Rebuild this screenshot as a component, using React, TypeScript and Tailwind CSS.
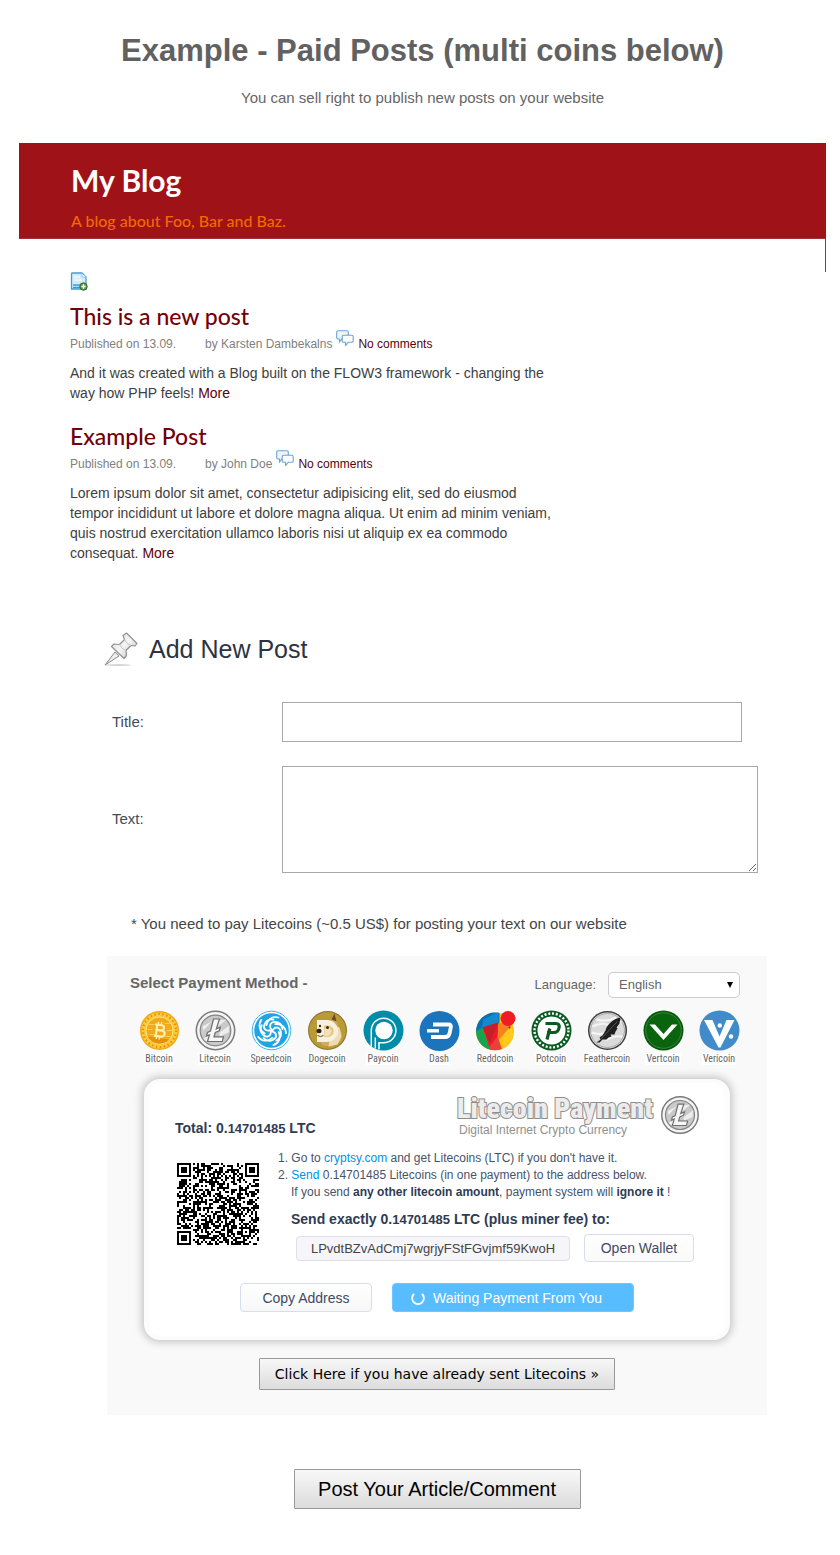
import type { ReactNode } from 'react'

const coins: { name: string; art: ReactNode }[] = [
  {
    name: 'Bitcoin',
    art: (
      <>
        <circle cx="20" cy="20" r="19.5" fill="#f0a818" />
        <circle cx="20" cy="20" r="18" fill="#fdc93b" />
        <circle cx="20" cy="20" r="16.5" fill="none" stroke="#e08f0c" strokeWidth="2" strokeDasharray="1.5 2.5" />
        <circle cx="20" cy="20" r="13.5" fill="#f3a91c" stroke="#ffe27a" strokeWidth="1" />
        <path d="M8 26 A14 14 0 0 0 30 29 Z" fill="#e68f10" />
        <path d="M9 14h6M25 13h7M8 19h5M27 20h6M10 24h4M26 26h5" stroke="#ffdc66" strokeWidth=".8" />
        <g transform="rotate(8 20 20)" fill="none" stroke="#fff0a8" strokeWidth="2.2">
          <path d="M17 14v12M15 14.500h6.500a2.600 2.600 0 0 1 0 5.200h-4M17 19.800h5.500a3 3 0 0 1 0 6H15" />
          <path d="M18 11.500v3M21 11.500v3M18 26v3M21 26v3" strokeWidth="1.400" />
        </g>
      </>
    ),
  },
  { name: 'Litecoin', art: <LitecoinArt /> },
  {
    name: 'Speedcoin',
    art: (
      <>
        <circle cx="20" cy="20" r="19.300" fill="#fff" stroke="#3bb6ea" strokeWidth="1" />
        <circle cx="20" cy="20" r="17.300" fill="#21a5e2" />
        {[0, 72, 144, 216, 288].map((angle) => (
          <g key={angle} transform={`rotate(${angle} 20 20)`} fill="none" stroke="#fff" strokeLinecap="round">
            <path d="M20 19C17 15 19 11 24 11.500C28 12 30.500 15 31 18.500" strokeWidth="1.800" />
            <path d="M15 14.500C16.500 8.500 21 5.500 27 7" strokeWidth="1.800" />
          </g>
        ))}
      </>
    ),
  },
  {
    name: 'Dogecoin',
    art: (
      <>
        <circle cx="20" cy="20" r="19.500" fill="#8b742d" />
        <circle cx="20" cy="20" r="18.500" fill="#b89a36" />
        <path d="M23 12l4-7 3 9 4 8v8l-9 6-10-1-5-8z" fill="#d5a960" />
        <path d="M24 9l3-6 2 8z" fill="#6c4a2c" />
        <path d="M24 15l8 2 2 9-4 8-9 2z" fill="#eedbb4" />
        <path d="M9.500 9.500h10a11 11 0 0 1 0 22h-10z" fill="#f6f1df" />
        <path d="M16.500 15h4a5.500 5.500 0 0 1 0 11.500h-4z" fill="#e9c57e" />
        <path d="M17 18l5-1 2 4-2 4-5 1z" fill="#f3e2b8" />
        <ellipse cx="11.500" cy="20.500" rx="2.600" ry="2.200" fill="#29231d" />
        <circle cx="12.500" cy="15.500" r="1.200" fill="#3a2c20" />
        <circle cx="20" cy="17" r="1.500" fill="#3a2c20" />
        <path d="M10 25q3 2 6 0" fill="none" stroke="#5e4733" strokeWidth="1" />
      </>
    ),
  },
  {
    name: 'Paycoin',
    art: (
      <>
        <circle cx="20" cy="20" r="20" fill="#008ba8" />
        <path d="M7.800 36V20A12.300 12.300 0 1 1 20 32.300H15.500V39" fill="none" stroke="#fff" strokeWidth="1.500" />
        <path d="M11.800 38V27" stroke="#fff" strokeWidth="1.500" />
        <circle cx="20.500" cy="20" r="8.700" fill="#fff" />
      </>
    ),
  },
  {
    name: 'Dash',
    art: (
      <>
        <circle cx="20" cy="20.500" r="20" fill="#1c75bc" />
        <path d="M13.500 14h15.500q3 0 2.300 3l-1.300 6q-.8 3.500-4.500 3.500H11.500" fill="none" stroke="#fff" strokeWidth="3.800" strokeLinejoin="round" />
        <path d="M7.500 20.300h12" stroke="#fff" strokeWidth="3.400" />
      </>
    ),
  },
  {
    name: 'Reddcoin',
    art: (
      <>
        <clipPath id="redd-disc"><circle cx="19.500" cy="21" r="19" /></clipPath>
        <g clipPath="url(#redd-disc)">
          <path d="M0 0h40v40H0z" fill="#ffc20e" />
          <path d="M0 0h24l0 13-18 6-6 4z" fill="#0072bc" />
          <path d="M8 9l15-8v12L6 18z" fill="#1588cf" />
          <path d="M0 21l7-4 8 22H6L0 34z" fill="#15a550" />
          <path d="M7 17l16-5-1 18-7 10z" fill="#ed1c24" />
          <path d="M7 17l16-5-9 21z" fill="#c5202a" />
          <path d="M23 12l13 3-14 16z" fill="#f58220" />
          <path d="M14 36l8-10 5 14H14z" fill="#e8403a" />
          <path d="M36 15l-8 9 0 16 12-4z" fill="#ffc91f" />
        </g>
        <circle cx="32.500" cy="8" r="7.500" fill="#ee1c25" />
        <circle cx="34" cy="17" r="1" fill="#6d2a1f" />
      </>
    ),
  },
  {
    name: 'Potcoin',
    art: (
      <>
        <circle cx="20" cy="20" r="20" fill="#0a5a22" />
        <circle cx="20" cy="20" r="17" fill="none" stroke="#fff" strokeWidth="2.400" strokeDasharray="2 1.815" />
        <circle cx="20" cy="20" r="14" fill="#fff" />
        <path d="M15.500 29l2.800-11M14 13h10.500q4 0 3 4.500t-5 4.500h-7" fill="none" stroke="#0a5a22" strokeWidth="3.200" />
      </>
    ),
  },
  {
    name: 'Feathercoin',
    art: (
      <>
        <circle cx="20" cy="20" r="19.500" fill="#3c3c3c" />
        <circle cx="20" cy="20" r="18" fill="#f2f2f2" />
        <circle cx="20" cy="20" r="17" fill="#dadada" stroke="#8a8a8a" strokeWidth=".7" />
        <path d="M5 16q8-4 15-2t14-3M4 22q9 3 15 0M18 30q8-5 17-4M9 9q10 3 20-2" fill="none" stroke="#f5f5f5" strokeWidth="2" />
        <path d="M33 7c-6 1-11 5-14 10l-1 3-3 5-3 2 1 2-4 3 3 0 3-3 4 0 2-2 3-1-1-2 4 0 1-3 2-3-1-1 3-4z" fill="#1f1f1f" />
        <path d="M11 31L30 11" stroke="#777" strokeWidth=".6" />
      </>
    ),
  },
  {
    name: 'Vertcoin',
    art: (
      <>
        <circle cx="20" cy="20" r="20" fill="#06590b" />
        <circle cx="20" cy="20" r="17.800" fill="#0a640e" stroke="#4c9650" strokeWidth=".7" />
        <path d="M6 14h5.500l8.500 9.500 8.500-9.500H34L20 29.500z" fill="#fff" />
      </>
    ),
  },
  {
    name: 'Vericoin',
    art: (
      <>
        <circle cx="20" cy="20" r="20" fill="#418bca" />
        <path d="M4.500 9.500h8.500l7 16.500 7-16.500H35L21 37h-2z" fill="#fff" />
        <circle cx="20.300" cy="15" r="2.200" fill="#fff" />
        <circle cx="31.500" cy="26" r="2.200" fill="#fff" />
      </>
    ),
  },
]

function LitecoinArt() {
  return (
    <>
      <circle cx="20" cy="20" r="19.200" fill="#f4f4f4" stroke="#7a7a7a" strokeWidth="1.500" />
      <circle cx="20" cy="20" r="15.300" fill="#c9c9c9" stroke="#858585" strokeWidth="1.200" />
      <path d="M7 16l9-5-8 9zM23 10l8-1-10 8zM8 28l6-3-3 6zM24 22l10-7-1 7-9 4z" fill="#eee" />
      <path d="M18 8.500h6l-3.200 10 4-1.800-1 3.500-4 1.800-1.300 4.300h9.500L26.800 31H12l2-6.800-3 1.300 1-3.500 3-1.400z" fill="#f7f7f7" stroke="#6e6e6e" strokeWidth="1.200" />
    </>
  )
}

const SIZE = 41

function qrCells() {
  const cells: string[] = []
  let seed = 14701485
  const ring = (x: number, y: number, cx: number, cy: number) => Math.max(Math.abs(x - cx), Math.abs(y - cy))
  for (let y = 0; y < SIZE; y++) {
    for (let x = 0; x < SIZE; x++) {
      seed = (seed * 48271) % 2147483647
      let dark = (seed >> 12) % 100 < 51
      if (x === 6 || y === 6) dark = (x + y) % 2 === 0
      const align = ring(x, y, 34, 34)
      if (align <= 2) dark = align !== 1
      for (const [cx, cy] of [[3, 3], [37, 3], [3, 37]]) {
        const d = ring(x, y, cx, cy)
        if (d <= 4) dark = d === 3 || d <= 1
      }
      if (dark) cells.push(`M${x} ${y}h1v1h-1z`)
    }
  }
  return cells.join('')
}

function CommentIcon() {
  return (
    <svg viewBox="0 0 18 16" className="mx-1 mb-2 h-4 w-[18px]" fill="#fff" stroke="#6aa5d8" strokeWidth="1.100">
      <path d="M2 .8h9q1.300 0 1.300 1.300v5.500q0 1.300-1.300 1.300H6L3.500 12V9H2Q.7 9 .7 7.600V2.100Q.7.800 2 .8z" fill="#eef5fc" />
      <path d="M7.500 5.300h8.300q1.400 0 1.400 1.400v4.300q0 1.300-1.400 1.300h-3.500L9.500 15.500v-3.200h-2q-1.300 0-1.300-1.300V6.700q0-1.400 1.300-1.400z" />
    </svg>
  )
}

function Post({ title, author, children }: { title: string; author: string; children: ReactNode }) {
  return (
    <article className="h-[120px]">
      <h2 className="font-[Lato,'Open_Sans',sans-serif] text-[23px] leading-[34px] font-medium text-[#730009]">{title}</h2>
      <p className="flex h-[21px] items-end text-xs leading-5 text-[#808080]">
        <span className="w-[135px]">Published on 13.09.</span>
        <span>by {author}</span>
        <CommentIcon />
        <a href="#comments" className="text-[#5c0008]">No comments</a>
      </p>
      <p className="mt-[9px] max-w-[488px] text-sm leading-5 text-[#404040]">{children}</p>
    </article>
  )
}

export default function App() {
  return (
    <main className="min-h-screen bg-white pr-[14px] pb-12 pl-[19px] font-['Liberation_Sans',Arial,sans-serif] text-[#666]">
      <header className="pt-[29px] text-center">
        <h1 className="text-[31px] leading-[44px] font-bold text-[#616161]">Example - Paid Posts (multi coins below)</h1>
        <p className="mt-[15px] text-[15px] leading-5">You can sell right to publish new posts on your website</p>
      </header>

      <section className="mt-[35px]">
        <div className="h-24 border-b border-[#a33038] bg-[#9f1218] pt-4 pl-[52px] font-[Lato,'Open_Sans',sans-serif]">
          <h2 className="text-3xl leading-[42px] font-bold text-white">My Blog</h2>
          <p className="mt-2 text-base leading-6 font-medium text-[#f06a00]">A blog about Foo, Bar and Baz.</p>
        </div>
        <div className="h-[33px] border-r border-r-[#a33038]" />
        <div className="pl-[51px]">
          <svg viewBox="0 0 18 19" className="h-[19px] w-[18px]">
            <path d="M2 1h10l4 4v12H1.500V2z" fill="#d3ecfb" stroke="#4a9ad4" strokeWidth="1.300" />
            <path d="M12 1.500V5h4" fill="#fff" stroke="#7dbbe6" strokeWidth=".8" />
            <path d="M4 5h6M4 8h8" stroke="#fff" strokeWidth="1.200" />
            <path d="M3 13h7M3 15.500h7" stroke="#27a2de" strokeWidth="1.300" />
            <circle cx="13.500" cy="14.500" r="3.700" fill="#5d9440" stroke="#376b23" />
            <path d="M13.500 12.300v4.400M11.300 14.500h4.400" stroke="#fff" strokeWidth="1.400" />
          </svg>
          <div className="mt-2">
            <Post title="This is a new post" author="Karsten Dambekalns">
              And it was created with a Blog built on the FLOW3 framework - changing the way how PHP feels! <a href="#more" className="text-[#5c0008]">More</a>
            </Post>
            <Post title="Example Post" author="John Doe">
              Lorem ipsum dolor sit amet, consectetur adipisicing elit, sed do eiusmod tempor incididunt ut labore et dolore magna aliqua. Ut enim ad minim veniam, quis nostrud exercitation ullamco laboris nisi ut aliquip ex ea commodo consequat. <a href="#more" className="text-[#5c0008]">More</a>
            </Post>
          </div>
        </div>
      </section>

      <div className="pl-[29px]">
        <form className="mx-auto mt-[93px] w-full max-w-[660px]" onSubmit={(e) => e.preventDefault()}>
          <div className="-ml-[3px] flex items-center gap-[11px]">
            <svg viewBox="0 0 34 34" className="h-[34px] w-[34px]">
              <defs>
                <linearGradient id="pin" x1="0" y1="0" x2="1" y2="1">
                  <stop offset="0" stopColor="#d8d8d8" />
                  <stop offset=".5" stopColor="#f6f6f6" />
                  <stop offset="1" stopColor="#b5b5b5" />
                </linearGradient>
              </defs>
              <ellipse cx="14" cy="33" rx="13" ry=".8" fill="#c9c9c9" />
              <path d="M11 20L1 33L15 24z" fill="#ededed" stroke="#8a8a8a" />
              <path d="M19 3.500L22.500 1 33 11.500 31 14l-4-.5-5 5 .5 5-2.500 3L7.500 14.500 10 12l5.500.5 5-5z" fill="url(#pin)" stroke="#929292" strokeWidth="1.200" strokeLinejoin="round" />
              <path d="M20.500 7.500q2 4.500 6.500 6M15.500 12.500q2 4.500 6.500 6" fill="none" stroke="#c6c6c6" />
            </svg>
            <h2 className="text-[25px] leading-[34px] text-[#2d3340]">Add New Post</h2>
          </div>

          <div className="mt-9 flex items-center pl-[5px] text-[15px] text-[#454b57]">
            <label htmlFor="title" className="w-[170px]">Title:</label>
            <input id="title" type="text" className="h-10 w-[460px] border border-[#a9a9a9] bg-white px-2" />
          </div>
          <div className="mt-6 flex items-center pl-[5px] text-[15px] text-[#454b57]">
            <label htmlFor="text" className="w-[170px]">Text:</label>
            <textarea id="text" className="block h-[107px] w-[476px] border border-[#a9a9a9] bg-white p-2" />
          </div>
          <p className="mt-[41px] pl-6 text-[15px] leading-5 text-[#454545]">* You need to pay Litecoins (~0.5 US$) for posting your text on our website</p>

          <section className="mt-[22px] bg-[#f9f9f9] pt-4 pb-[25px]">
            <div className="flex items-center justify-between pr-[27px] pl-[23px]">
              <h3 className="pb-1 text-[15px] leading-5 font-bold">Select Payment Method -</h3>
              <div className="flex items-center gap-3 text-[13px]">
                <label htmlFor="language">Language:</label>
                <div className="relative">
                  <select id="language" className="h-[26px] w-[132px] appearance-none rounded-[5px] border border-[#ccc] bg-white pl-[10px]">
                    <option>English</option>
                  </select>
                  <svg viewBox="0 0 8 7" className="pointer-events-none absolute top-[10px] right-[6px] h-[7px] w-2"><path d="M1 0h6L4 6z" /></svg>
                </div>
              </div>
            </div>

            <ul className="mt-3 grid grid-cols-11 pr-5 pl-6">
              {coins.map((coin) => (
                <li key={coin.name}>
                  <a href={'#' + coin.name.toLowerCase()} className="flex flex-col items-center font-['Roboto_Condensed',Roboto,sans-serif] text-[10px] leading-3 text-[#666]">
                    <svg viewBox="-.5 -.5 41 41" className="h-[41px] w-[41px]">{coin.art}</svg>
                    <span className="mt-[2px] bg-[#fefefe] px-px">{coin.name}</span>
                  </a>
                </li>
              ))}
            </ul>

            <div className="mx-[37px] mt-[14px] rounded-2xl border-x-[6px] border-y-4 border-[#fcfcfc] bg-white px-[25px] pb-6 text-[#2f3b54] shadow-[0_0_8px_2px_rgba(0,0,0,0.22)]">
              <div className="flex justify-between pt-[13px]">
                <p className="pt-[22px] text-sm leading-5 font-bold">Total: 0.<span className="text-[13px]">14701485</span> LTC</p>
                <div className="flex items-start gap-[7px]">
                  <div className="w-[197px] whitespace-nowrap">
                    <p className="font-['Roboto_Condensed',Roboto,sans-serif] text-[28px] leading-[26px] font-black text-[#ececec] [paint-order:stroke] [-webkit-text-stroke:2px_#8d8d8d]">Litecoin Payment</p>
                    <p className="pl-[2px] text-xs leading-4 text-[#8f8f8f]">Digital Internet Crypto Currency</p>
                  </div>
                  <svg viewBox="0 0 40 40" className="h-[38px] w-[38px]"><LitecoinArt /></svg>
                </div>
              </div>

              <div className="mt-[11px] flex gap-[19px]">
                <svg viewBox={`0 0 ${SIZE} ${SIZE}`} className="mt-[13px] ml-[2px] h-[82px] w-[82px] shrink-0" shapeRendering="crispEdges"><path d={qrCells()} /></svg>
                <div className="min-w-0 whitespace-nowrap">
                  <ol className="list-inside list-decimal text-xs leading-[17px] text-[#47536b]">
                    <li>Go to <a href="#exchange" className="text-[#0093dd]">cryptsy.com</a> and get Litecoins (LTC) if you don't have it.</li>
                    <li>
                      <a href="#send" className="text-[#0093dd]">Send</a> 0.14701485 Litecoins (in one payment) to the address below.
                      <p className="pl-[13px]">If you send <b className="text-[#2f3b54]">any other litecoin amount</b>, payment system will <b className="text-[#2f3b54]">ignore it</b> !</p>
                    </li>
                  </ol>
                  <p className="mt-2 pl-[13px] text-sm leading-5 font-bold">Send exactly 0.<span className="text-[13px]">14701485</span> LTC (plus miner fee) to:</p>
                  <div className="mt-1 flex items-center gap-[14px] pl-[18px]">
                    <input aria-label="Litecoin address" readOnly value="LPvdtBZvAdCmj7wgrjyFStFGvjmf59KwoH" className="h-[25px] w-[274px] rounded-sm border border-[#dfdfe8] bg-[#f6f6fa] text-center text-[13px] text-[#444]" />
                    <button type="button" className="h-[28px] w-[110px] rounded-sm border border-[#d5deea] bg-linear-to-b from-white to-[#fafafb] text-sm text-[#3f4a63]">Open Wallet</button>
                  </div>
                </div>
              </div>

              <div className="mt-[21px] flex justify-center gap-5">
                <button type="button" className="h-[29px] w-[132px] rounded-sm border border-[#d5deea] bg-linear-to-b from-white to-[#f7f7f9] text-sm text-[#3f4a63]">Copy Address</button>
                <button type="button" className="flex h-[29px] w-[242px] items-center gap-2 rounded-sm border border-[#6fc7ff] bg-[#57bdff] pl-[18px] text-sm font-medium text-white">
                  <svg viewBox="0 0 14 14" className="h-[14px] w-[14px]" fill="none" stroke="#fff" strokeWidth="2" strokeLinecap="round"><path d="M2.500 3.500A5.800 5.800 0 1 0 11.500 3.500" /></svg>
                  Waiting Payment From You
                </button>
              </div>
            </div>

            <div className="mt-[18px] flex justify-center">
              <button type="button" className="h-8 w-[356px] rounded-[1px] border border-[#999] bg-linear-to-b from-[#f8f8f8] to-[#dcdcdc] font-['DejaVu_Sans',Verdana,sans-serif] text-sm text-black">Click Here if you have already sent Litecoins »</button>
            </div>
          </section>

          <div className="mt-[54px] flex justify-center">
            <button type="submit" className="h-10 w-[287px] rounded-[1px] border border-[#999] bg-linear-to-b from-[#f8f8f8] to-[#dcdcdc] text-xl text-black">Post Your Article/Comment</button>
          </div>
        </form>
      </div>
    </main>
  )
}
